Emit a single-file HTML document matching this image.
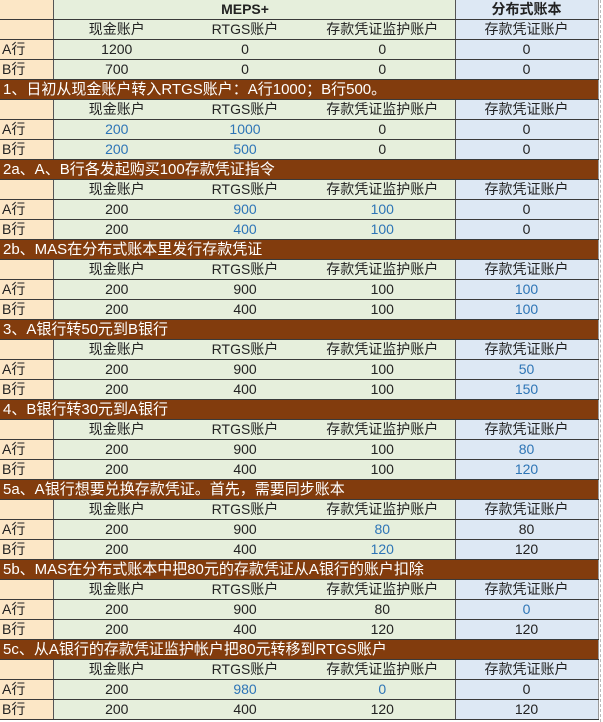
<!DOCTYPE html><html><head><meta charset="utf-8"><style>
body{margin:0;width:603px;height:722px;background:#fff;overflow:hidden;font-family:"Liberation Sans","Noto Sans CJK SC",sans-serif;}
table{border-collapse:collapse;table-layout:fixed;position:absolute;left:0;top:0;width:598px;border-right:1px solid #999;}
td{height:19px;padding:0;border-bottom:1px solid #3a3a3a;font-size:14px;text-align:center;color:#222;white-space:nowrap;overflow:visible;line-height:19px;}
td.l{background:#fce7c6;text-align:left;padding-left:2px;border-right:1px solid #555;}
td.g{background:#e6efdc;}
td.b{background:#dde8f4;border-left:1px solid #555;}
td.t{background:#823c0d;color:#fff;text-align:left;font-size:15px;padding-left:3px;}
.u{color:#2e75b6;}
.h{font-weight:bold;}
.dash{position:absolute;left:600px;top:0;height:722px;border-left:1px dashed #bbb;}
</style></head><body>
<table>
<colgroup><col style="width:53px"><col style="width:127px"><col style="width:130px"><col style="width:145px"><col style="width:143px"></colgroup>
<tr><td class="l"></td><td class="g"></td><td class="g h">MEPS+</td><td class="g"></td><td class="b h">分布式账本</td></tr>
<tr><td class="l"></td><td class="g">现金账户</td><td class="g">RTGS账户</td><td class="g">存款凭证监护账户</td><td class="b">存款凭证账户</td></tr>
<tr><td class="l">A行</td><td class="g">1200</td><td class="g">0</td><td class="g">0</td><td class="b">0</td></tr>
<tr><td class="l">B行</td><td class="g">700</td><td class="g">0</td><td class="g">0</td><td class="b">0</td></tr>

<tr><td class="t" colspan="5">1、日初从现金账户转入RTGS账户：A行1000；B行500。</td></tr>
<tr><td class="l"></td><td class="g">现金账户</td><td class="g">RTGS账户</td><td class="g">存款凭证监护账户</td><td class="b">存款凭证账户</td></tr>
<tr><td class="l">A行</td><td class="g u">200</td><td class="g u">1000</td><td class="g">0</td><td class="b">0</td></tr>
<tr><td class="l">B行</td><td class="g u">200</td><td class="g u">500</td><td class="g">0</td><td class="b">0</td></tr>

<tr><td class="t" colspan="5">2a、A、B行各发起购买100存款凭证指令</td></tr>
<tr><td class="l"></td><td class="g">现金账户</td><td class="g">RTGS账户</td><td class="g">存款凭证监护账户</td><td class="b">存款凭证账户</td></tr>
<tr><td class="l">A行</td><td class="g">200</td><td class="g u">900</td><td class="g u">100</td><td class="b">0</td></tr>
<tr><td class="l">B行</td><td class="g">200</td><td class="g u">400</td><td class="g u">100</td><td class="b">0</td></tr>

<tr><td class="t" colspan="5">2b、MAS在分布式账本里发行存款凭证</td></tr>
<tr><td class="l"></td><td class="g">现金账户</td><td class="g">RTGS账户</td><td class="g">存款凭证监护账户</td><td class="b">存款凭证账户</td></tr>
<tr><td class="l">A行</td><td class="g">200</td><td class="g">900</td><td class="g">100</td><td class="b u">100</td></tr>
<tr><td class="l">B行</td><td class="g">200</td><td class="g">400</td><td class="g">100</td><td class="b u">100</td></tr>

<tr><td class="t" colspan="5">3、A银行转50元到B银行</td></tr>
<tr><td class="l"></td><td class="g">现金账户</td><td class="g">RTGS账户</td><td class="g">存款凭证监护账户</td><td class="b">存款凭证账户</td></tr>
<tr><td class="l">A行</td><td class="g">200</td><td class="g">900</td><td class="g">100</td><td class="b u">50</td></tr>
<tr><td class="l">B行</td><td class="g">200</td><td class="g">400</td><td class="g">100</td><td class="b u">150</td></tr>

<tr><td class="t" colspan="5">4、B银行转30元到A银行</td></tr>
<tr><td class="l"></td><td class="g">现金账户</td><td class="g">RTGS账户</td><td class="g">存款凭证监护账户</td><td class="b">存款凭证账户</td></tr>
<tr><td class="l">A行</td><td class="g">200</td><td class="g">900</td><td class="g">100</td><td class="b u">80</td></tr>
<tr><td class="l">B行</td><td class="g">200</td><td class="g">400</td><td class="g">100</td><td class="b u">120</td></tr>

<tr><td class="t" colspan="5">5a、A银行想要兑换存款凭证。首先，需要同步账本</td></tr>
<tr><td class="l"></td><td class="g">现金账户</td><td class="g">RTGS账户</td><td class="g">存款凭证监护账户</td><td class="b">存款凭证账户</td></tr>
<tr><td class="l">A行</td><td class="g">200</td><td class="g">900</td><td class="g u">80</td><td class="b">80</td></tr>
<tr><td class="l">B行</td><td class="g">200</td><td class="g">400</td><td class="g u">120</td><td class="b">120</td></tr>

<tr><td class="t" colspan="5">5b、MAS在分布式账本中把80元的存款凭证从A银行的账户扣除</td></tr>
<tr><td class="l"></td><td class="g">现金账户</td><td class="g">RTGS账户</td><td class="g">存款凭证监护账户</td><td class="b">存款凭证账户</td></tr>
<tr><td class="l">A行</td><td class="g">200</td><td class="g">900</td><td class="g">80</td><td class="b u">0</td></tr>
<tr><td class="l">B行</td><td class="g">200</td><td class="g">400</td><td class="g">120</td><td class="b">120</td></tr>

<tr><td class="t" colspan="5">5c、从A银行的存款凭证监护帐户把80元转移到RTGS账户</td></tr>
<tr><td class="l"></td><td class="g">现金账户</td><td class="g">RTGS账户</td><td class="g">存款凭证监护账户</td><td class="b">存款凭证账户</td></tr>
<tr><td class="l">A行</td><td class="g">200</td><td class="g u">980</td><td class="g u">0</td><td class="b">0</td></tr>
<tr><td class="l">B行</td><td class="g">200</td><td class="g">400</td><td class="g">120</td><td class="b">120</td></tr>
</table>
<div class="dash"></div>
</body></html>
